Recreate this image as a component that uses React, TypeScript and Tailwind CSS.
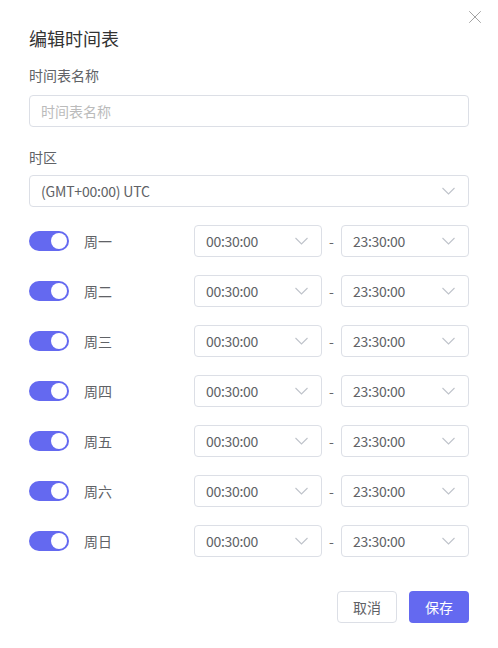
import { X } from "lucide-react"

const days = ["周一", "周二", "周三", "周四", "周五", "周六", "周日"]

function Chevron() {
  return (
    <svg width="13" height="8" viewBox="0 0 13 8" fill="none" className="text-[#bfc3ca]">
      <polyline points="0.5,1 6.5,7 12.5,1" stroke="currentColor" strokeWidth="1.1" />
    </svg>
  )
}

function Toggle() {
  return (
    <div className="w-10 h-5 rounded-full bg-[#6469f0] flex items-center justify-end pr-[2px]">
      <div className="w-4 h-4 rounded-full bg-white" />
    </div>
  )
}

function TimeSelect({ value }: { value: string }) {
  return (
    <div className="w-[128px] h-8 border border-[#dcdfe6] rounded flex items-center justify-between pl-[11px] pr-[13px] text-[14px] text-[#606266] tracking-[-0.3px]">
      <span>{value}</span>
      <Chevron />
    </div>
  )
}

export default function App() {
  return (
    <div
      className="relative w-[498px] h-[648px] bg-white px-[29px] pt-[26px]"
      style={{ fontFamily: '"Noto Sans CJK SC", "Noto Sans", sans-serif' }}
    >
      {/* Close */}
      <button className="absolute right-[12px] top-[6px] text-[#9a9a9a]">
        <X className="w-[22px] h-[22px]" strokeWidth={1} />
      </button>

      <h2 className="text-[18px] leading-6 text-[#333]">编辑时间表</h2>

      <div className="mt-[15px] text-[14px] leading-5 text-[#606266]">时间表名称</div>
      <div className="mt-[10px] w-[440px] h-8 border border-[#dcdfe6] rounded flex items-center px-[11px] text-[14px] text-[#bbbbbb]">
        时间表名称
      </div>

      <div className="mt-[20px] text-[14px] leading-5 text-[#606266]">时区</div>
      <div className="mt-[8px] w-[440px] h-8 border border-[#dcdfe6] rounded flex items-center justify-between pl-[11px] pr-[13px] text-[14px] text-[#606266] tracking-[-0.2px]">
        <span>(GMT+00:00) UTC</span>
        <Chevron />
      </div>

      {/* Days */}
      <div className="mt-[18px] flex flex-col gap-[18px]">
        {days.map((d) => (
          <div key={d} className="flex items-center h-8">
            <Toggle />
            <span className="ml-[15px] w-[110px] text-[14px] text-[#606266]">{d}</span>
            <TimeSelect value="00:30:00" />
            <span className="w-[19px] text-center text-[14px] text-[#666]">-</span>
            <TimeSelect value="23:30:00" />
          </div>
        ))}
      </div>

      {/* Footer */}
      <div className="mt-[34px] flex justify-end gap-3">
        <button className="w-[60px] h-8 border border-[#dcdfe6] rounded text-[14px] text-[#606266]">取消</button>
        <button className="w-[60px] h-8 rounded bg-[#6469f0] text-[14px] text-white">保存</button>
      </div>
    </div>
  )
}
